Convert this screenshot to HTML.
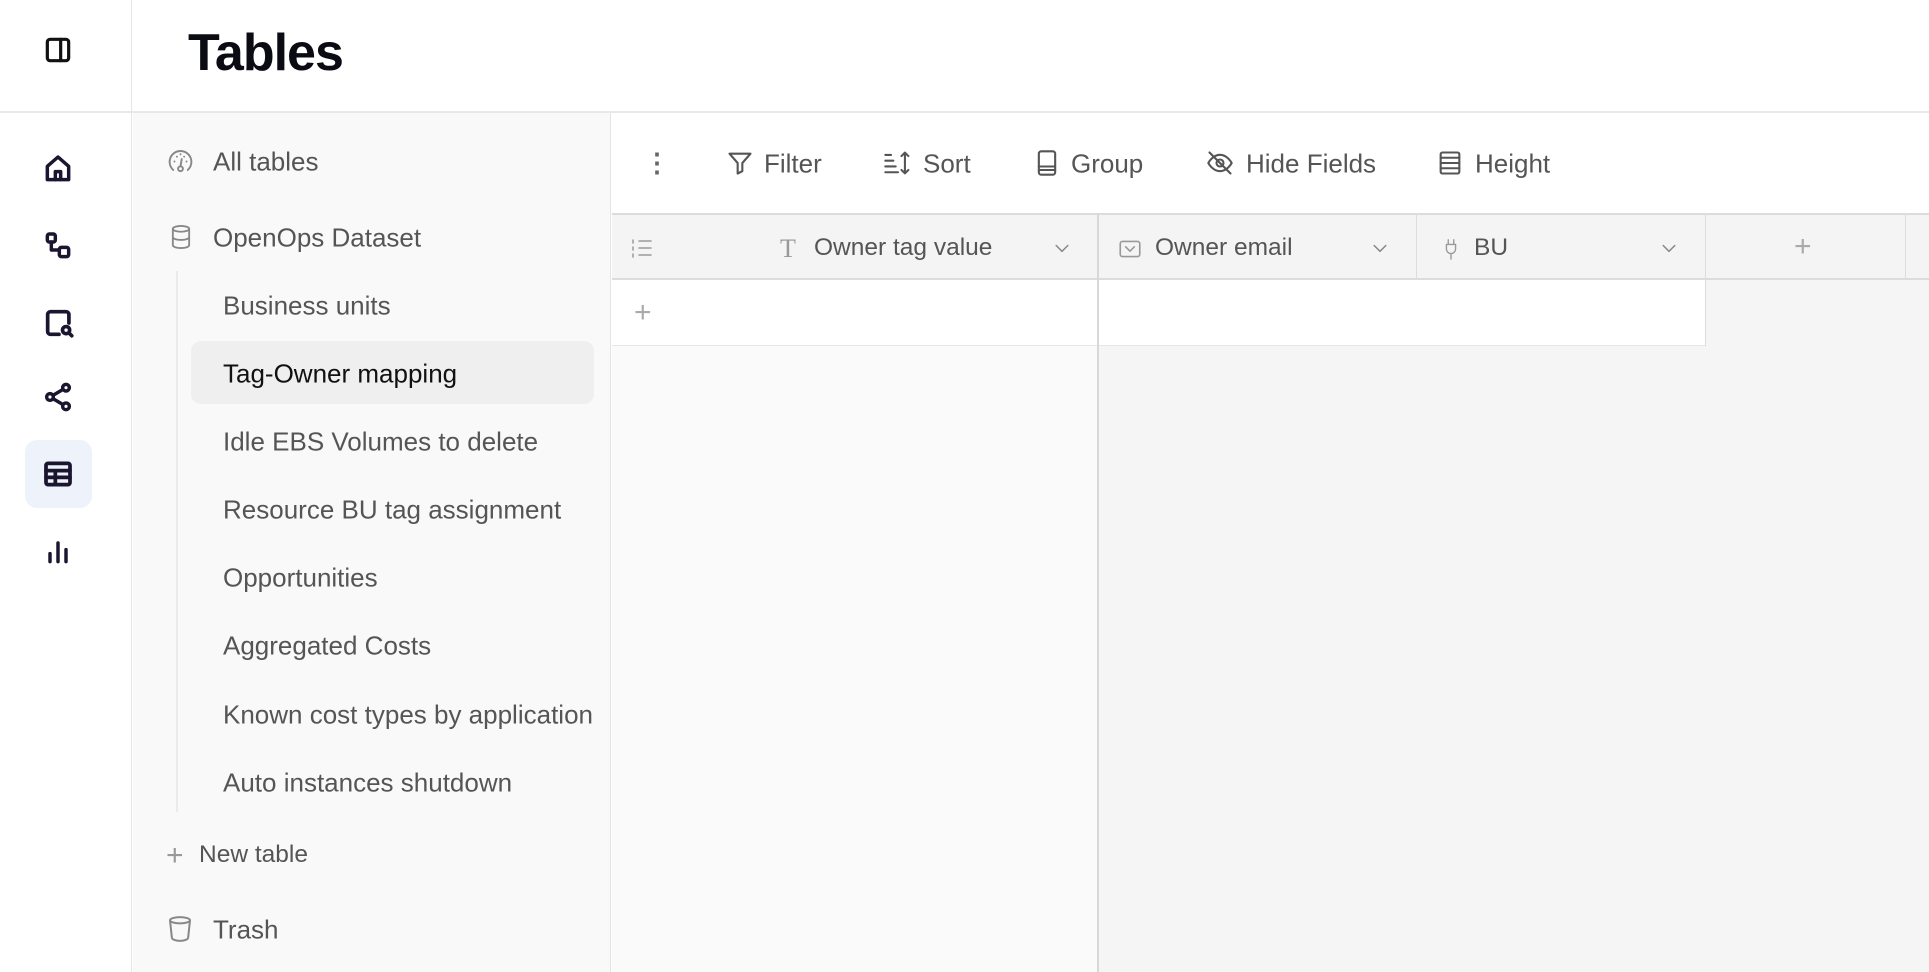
<!DOCTYPE html>
<html><head><style>
*{margin:0;padding:0;box-sizing:border-box}
body{width:1929px;height:972px;overflow:hidden;background:#fff;font-family:"Liberation Sans",sans-serif;position:relative}
.a{position:absolute}
.t{position:absolute;white-space:nowrap;transform:translateY(-50%);font-size:26px;color:#555}
svg.i{position:absolute;fill:none;stroke-linecap:round;stroke-linejoin:round}
</style></head><body>
<div class="a" style="left:0;top:0;width:132px;height:972px;background:#fff;border-right:1px solid #e6e6e6"></div>
<div class="a" style="left:0;top:111px;width:1929px;height:2px;background:#e8e8e8"></div>
<svg class="i" style="left:42px;top:34px" width="32" height="32" viewBox="0 0 24 24" stroke="#111" stroke-width="2.4"><rect x="4" y="4" width="16" height="16" rx="2"/><path d="M14 4v16"/></svg>
<div class="t" style="left:188px;top:53px;font-size:52px;font-weight:bold;color:#0b0b14;letter-spacing:-1px">Tables</div>
<svg class="i" style="left:42px;top:153px" width="32" height="32" viewBox="0 0 24 24" stroke="#1b1530" stroke-width="2.6"><path d="M4 10l8-7 8 7v10H4z"/><path d="M10 20v-6h4v6"/></svg>
<svg class="i" style="left:42px;top:230px" width="32" height="32" viewBox="0 0 24 24" stroke="#1b1530" stroke-width="2.6"><rect x="4" y="3" width="6" height="6" rx="1.5"/><rect x="13" y="13" width="7" height="7" rx="1.5"/><path d="M7 9v6h6"/></svg>
<svg class="i" style="left:42px;top:306px" width="34" height="34" viewBox="0 0 24 24" stroke="#1b1530" stroke-width="2.6"><path d="M12 20H6a2 2 0 0 1-2-2V6a2 2 0 0 1 2-2h11a2 2 0 0 1 2 2v6"/><circle cx="17" cy="17" r="2.5"/><path d="M19 19l2 2"/></svg>
<svg class="i" style="left:42px;top:381px" width="32" height="32" viewBox="0 0 24 24" stroke="#1b1530" stroke-width="2.6"><circle cx="6" cy="12" r="2.5"/><circle cx="18" cy="5" r="2.5"/><circle cx="18" cy="19" r="2.5"/><path d="M8.2 10.8l7.6-4.5M8.2 13.2l7.6 4.5"/></svg>
<div class="a" style="left:25px;top:440px;width:67px;height:68px;border-radius:12px;background:#eef3fb"></div>
<svg class="i" style="left:42px;top:458px" width="32" height="32" viewBox="0 0 24 24" stroke="#1b1530" stroke-width="2.8"><rect x="3" y="4" width="18" height="16" rx="1.5"/><path d="M3 9.5h18M3 14.5h18M10 9.5v10.5"/></svg>
<svg class="i" style="left:42px;top:535px" width="32" height="32" viewBox="0 0 24 24" stroke="#1b1530" stroke-width="2.6"><path d="M6 20v-6M12 20V6M18 20v-9"/></svg>
<div class="a" style="left:133px;top:113px;width:478px;height:859px;background:#f9f9f9;border-right:1px solid #e4e4e4"></div>
<div class="a" style="left:176px;top:271px;width:2px;height:541px;background:#ebebeb"></div>
<div class="a" style="left:191px;top:341px;width:403px;height:63px;border-radius:10px;background:#efefef"></div>
<svg class="i" style="left:166px;top:147px" width="29" height="29" viewBox="0 0 24 24" stroke="#888" stroke-width="1.6"><path d="M6 19A9 9 0 1 1 18 19"/><circle cx="12" cy="18" r="2"/><path d="M12 16l1-6"/><path d="M7 12h.01M9 8h.01M15 8h.01M17 12h.01M12 6h.01"/></svg>
<div class="t" style="left:213px;top:162px">All tables</div>
<svg class="i" style="left:167px;top:223px" width="28" height="28" viewBox="0 0 24 24" stroke="#888" stroke-width="1.6"><ellipse cx="12" cy="5" rx="7" ry="2.5"/><path d="M5 5v14c0 1.4 3 2.5 7 2.5s7-1.1 7-2.5V5M5 12c0 1.4 3 2.5 7 2.5s7-1.1 7-2.5"/></svg>
<div class="t" style="left:213px;top:238px">OpenOps Dataset</div>
<div class="t" style="left:223px;top:306px">Business units</div>
<div class="t" style="left:223px;top:374px;color:#111">Tag-Owner mapping</div>
<div class="t" style="left:223px;top:442px">Idle EBS Volumes to delete</div>
<div class="t" style="left:223px;top:510px">Resource BU tag assignment</div>
<div class="t" style="left:223px;top:578px">Opportunities</div>
<div class="t" style="left:223px;top:646px">Aggregated Costs</div>
<div class="a" style="left:223px;top:698px;width:372px;height:34px;overflow:hidden"><div class="t" style="left:0;top:17px">Known cost types by application</div></div>
<div class="t" style="left:223px;top:783px">Auto instances shutdown</div>
<div class="t" style="left:166px;top:856px;color:#999;font-size:30px">+</div>
<div class="t" style="left:199px;top:855px;font-size:24.5px">New table</div>
<svg class="i" style="left:165px;top:914px" width="30" height="30" viewBox="0 0 24 24" stroke="#888" stroke-width="1.6"><ellipse cx="12" cy="5" rx="8" ry="2.5"/><path d="M4 5l1.5 14c.2 1.4 3 2.5 6.5 2.5s6.3-1.1 6.5-2.5L20 5"/></svg>
<div class="t" style="left:213px;top:930px">Trash</div>
<div class="a" style="left:612px;top:113px;width:1317px;height:101px;background:#fff"></div>
<div class="a" style="left:612px;top:214px;width:1317px;height:758px;background:#f5f5f5"></div>
<div class="a" style="left:612px;top:214px;width:485px;height:758px;background:#fafafa"></div>
<div class="t" style="left:644px;top:163px;font-size:26px;color:#666;font-weight:bold">⋮</div>
<svg class="i" style="left:726px;top:149px" width="28" height="28" viewBox="0 0 24 24" stroke="#555" stroke-width="1.8"><path d="M3 4h18l-7 8v7l-4 2v-9z"/></svg>
<div class="t" style="left:764px;top:164px">Filter</div>
<svg class="i" style="left:883px;top:149px" width="30" height="28" viewBox="0 0 26 24" stroke="#555" stroke-width="1.8"><path d="M2 5h5M2 10h7M2 15h9M2 20h11M19 3v18M16 6l3-3 3 3M16 18l3 3 3-3"/></svg>
<div class="t" style="left:923px;top:164px">Sort</div>
<svg class="i" style="left:1033px;top:149px" width="28" height="28" viewBox="0 0 24 24" stroke="#555" stroke-width="1.8"><rect x="5" y="2" width="14" height="20" rx="2"/><path d="M5 15h14M5 18h14"/></svg>
<div class="t" style="left:1071px;top:164px">Group</div>
<svg class="i" style="left:1206px;top:149px" width="28" height="28" viewBox="0 0 24 24" stroke="#555" stroke-width="1.8"><path d="M2 12s3.5-7 10-7 10 7 10 7-3.5 7-10 7S2 12 2 12z"/><circle cx="12" cy="12" r="3"/><path d="M3 3l18 18"/></svg>
<div class="t" style="left:1246px;top:164px">Hide Fields</div>
<svg class="i" style="left:1436px;top:149px" width="28" height="28" viewBox="0 0 24 24" stroke="#555" stroke-width="1.8"><rect x="4" y="3" width="16" height="18" rx="1.5"/><path d="M4 7.5h16M4 12h16M4 16.5h16"/></svg>
<div class="t" style="left:1475px;top:164px">Height</div>
<div class="a" style="left:612px;top:213px;width:1317px;height:67px;background:#f4f4f4;border-top:2px solid #dcdcdc;border-bottom:2px solid #dcdcdc"></div>
<div class="a" style="left:612px;top:280px;width:1093px;height:66px;background:#fff;border-bottom:1px solid #e6e6e6"></div>
<div class="a" style="left:1097px;top:213px;width:2px;height:759px;background:#d8d8d8"></div>
<div class="a" style="left:1416px;top:213px;width:1px;height:67px;background:#dcdcdc"></div>
<div class="a" style="left:1705px;top:213px;width:1px;height:133px;background:#dcdcdc"></div>
<div class="a" style="left:1905px;top:213px;width:1px;height:67px;background:#dcdcdc"></div>
<svg class="i" style="left:630px;top:236px" width="24" height="24" viewBox="0 0 24 24" stroke="#999" stroke-width="1.5"><path d="M9 5h12M9 12h12M9 19h12M3 4v3M3 11v3M3 18v3"/></svg>
<div class="t" style="left:780px;top:249px;color:#999;font-size:26px;font-family:'Liberation Serif',serif">T</div>
<div class="t" style="left:814px;top:248px;font-size:24.5px">Owner tag value</div>
<svg class="i" style="left:1052px;top:238px" width="20" height="20" viewBox="0 0 24 24" stroke="#888" stroke-width="1.8"><path d="M5 9l7 7 7-7"/></svg>
<svg class="i" style="left:1117px;top:236px" width="26" height="26" viewBox="0 0 24 24" stroke="#999" stroke-width="1.5"><rect x="3" y="5" width="18" height="14" rx="2"/><path d="M8 10l4 4 4-4"/></svg>
<div class="t" style="left:1155px;top:248px;font-size:24.5px">Owner email</div>
<svg class="i" style="left:1370px;top:238px" width="20" height="20" viewBox="0 0 24 24" stroke="#888" stroke-width="1.8"><path d="M5 9l7 7 7-7"/></svg>
<svg class="i" style="left:1440px;top:236px" width="22" height="26" viewBox="0 0 24 24" stroke="#999" stroke-width="1.5"><path d="M9 2v5M15 2v5M7 7h10v5a5 5 0 0 1-10 0zM12 17v6"/></svg>
<div class="t" style="left:1474px;top:248px;font-size:24.5px">BU</div>
<svg class="i" style="left:1659px;top:238px" width="20" height="20" viewBox="0 0 24 24" stroke="#888" stroke-width="1.8"><path d="M5 9l7 7 7-7"/></svg>
<div class="t" style="left:1794px;top:247px;color:#aaa;font-size:30px">+</div>
<div class="t" style="left:634px;top:313px;color:#aaa;font-size:30px">+</div>
</body></html>
